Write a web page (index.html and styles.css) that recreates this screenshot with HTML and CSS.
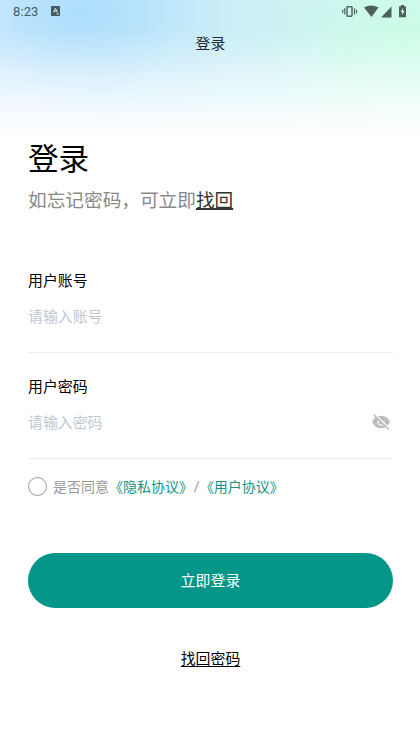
FILE: index.html
```html
<!DOCTYPE html>
<html lang="zh-CN">
<head>
<meta charset="utf-8">
<meta name="viewport" content="width=device-width, initial-scale=1">
<title>登录</title>
<link rel="stylesheet" href="styles.css">
</head>
<body>
<div class="hero">
  <div class="status">
    <span class="time">8:23</span>
    <svg class="app-icon" width="9" height="10" viewBox="0 0 9 10"><rect width="9" height="10" rx=".6" fill="#465b65"/><path d="M2.500 6.500 4.500 2.300 6.500 6.500M3.300 5.200H5.700M5.500 8H7.500" fill="none" stroke="#d5edf8" stroke-width="1"/></svg>
    <svg class="system-icons" width="66" height="14" viewBox="0 0 66 14">
      <g fill="none" stroke="#526861" stroke-width="1.200"><rect x="5" y="1.700" width="5" height="9.600" rx=".7" stroke-width="1.500"/><path d="M2.700 3.300v6.200M.7 4.800v3.500M12.500 3.300v6.200M14.500 4.800v3.500"/></g>
      <g fill="#4c625b"><path d="M22 2.500Q29-1.500 36.500 2.500L29.500 12Z"/><path d="M49.500 1.500V12.500H39Z"/><path d="M57.600 1.200H59V0h3v1.200h1.400q.6 0 .6.600v9.900q0 .6-.6.600h-5.800q-.6 0-.6-.6V1.800q0-.6.600-.6Z"/></g>
      <path d="M61.100 3 58.700 7h1.500v3l2.400-4.100h-1.500Z" fill="#d6fbeb"/>
    </svg>
  </div>
  <div class="nav-title">登录</div>
</div>
<main class="content">
  <h1>登录</h1>
  <p class="hint">如忘记密码，可立即<a>找回</a></p>
  <section class="field">
    <label>用户账号</label>
    <div class="entry"><span>请输入账号</span></div>
  </section>
  <section class="field">
    <label>用户密码</label>
    <div class="entry"><span>请输入密码</span>
      <svg class="eye" width="20" height="18" viewBox="0 0 20 18"><path d="M1 9Q4 2.700 10 2.700T19 9Q16 15.300 10 15.300T1 9Z" fill="#bdbdbd"/><path d="M7.300 7.500C6 10.800 8.200 12.400 10.300 12.200S13.500 9.800 12.700 8.200M9.500 6.700q.3 2.500 2.700 2.500" fill="none" stroke="#fff" stroke-width="1.100"/><path d="M3.500 1 19.200 16.300" stroke="#fff" stroke-width="1.300"/><path d="M2.500 1.500 18 16.700" stroke="#bdbdbd" stroke-width="1.500"/></svg>
    </div>
  </section>
  <div class="agree"><span class="radio"></span><span>是否同意<a>《隐私协议》</a><span class="slash">/</span><a>《用户协议》</a></span></div>
  <div class="submit">立即登录</div>
  <div class="recover"><a>找回密码</a></div>
</main>
</body>
</html>
```
FILE: styles.css
```css
* { box-sizing: border-box; }
body {
  margin: 0;
  height: 746px;
  overflow: hidden;
  background: #fff;
  font-family: Roboto, "Noto Sans CJK SC", sans-serif;
  font-size: 14.9px;
  color: #000;
}
.hero {
  height: 134px;
  background:
    linear-gradient(180deg, rgba(255,255,255,0) 22%, rgba(255,255,255,.22) 42%, rgba(255,255,255,.62) 70%, rgba(255,255,255,.88) 90%, rgba(255,255,255,.96) 100%),
    radial-gradient(ellipse 140px 120px at 405px 45px, rgba(202,252,230,.9) 0%, rgba(202,252,230,.5) 40%, rgba(202,252,230,.15) 75%, rgba(202,252,230,0) 100%),
    radial-gradient(ellipse 150px 110px at 82px 10px, rgba(168,220,252,.85) 0%, rgba(168,220,252,.5) 40%, rgba(168,220,252,.13) 75%, rgba(168,220,252,0) 100%),
    linear-gradient(90deg, #d0eafd 0%, #c8e9fb 25%, #c9edf8 50%, #cef3f3 72%, #d2faee 100%);
}
.status {
  display: flex;
  align-items: center;
  height: 24px;
  padding: 0 13px;
}
.time { font-size: 13px; line-height: 24px; color: #465b65; letter-spacing: .1px; }
.app-icon { margin-left: 12.500px; margin-top: -2px; }
.system-icons { margin-left: auto; margin-right: -1px; margin-top: -1px; }
.nav-title {
  height: 40px;
  line-height: 40px;
  padding-left: 1px;
  text-align: center;
  color: #252c30;
}
.content { padding: 0 27px 0 28px; }
h1 {
  margin: 0;
  padding-top: 4px;
  height: 49px;
  line-height: 44px;
  font-size: 30.6px;
  font-weight: 400;
}
.hint {
  margin: 0;
  height: 84px;
  line-height: 36px;
  font-size: 18.67px;
  color: #888;
}
.hint a {
  color: #333;
  text-decoration: underline;
  text-decoration-thickness: 1.500px;
  text-underline-offset: 1px;
}
.field { height: 106px; }
.field:first-of-type { height: 86px; margin-bottom: 20px; }
.field label { display: block; height: 28px; line-height: 28px; }
.field .entry {
  display: flex;
  align-items: center;
  justify-content: space-between;
  height: 58px;
  padding-bottom: 16px;
  border-bottom: 1px solid #eee;
  color: #c0c8d0;
}
.eye { margin-right: 2px; margin-top: 1px; }
.agree {
  display: flex;
  align-items: center;
  height: 20px;
  margin-top: -3px;
  font-size: 14px;
  color: #999;
  white-space: nowrap;
}
.radio {
  width: 19px;
  height: 19px;
  margin-right: 6px;
  border: 1px solid #999;
  border-radius: 50%;
}
.agree a { color: #149486; }
.slash { margin: 0 .3px .3px .8px; }
.submit {
  height: 55px;
  margin-top: 57px;
  border-radius: 28px;
  background: #049688;
  color: #fff;
  line-height: 57px;
  text-align: center;
}
.recover { margin-top: 36px; line-height: 31px; text-align: center; }
.recover a { text-decoration: underline; text-underline-offset: 2px; }
```
